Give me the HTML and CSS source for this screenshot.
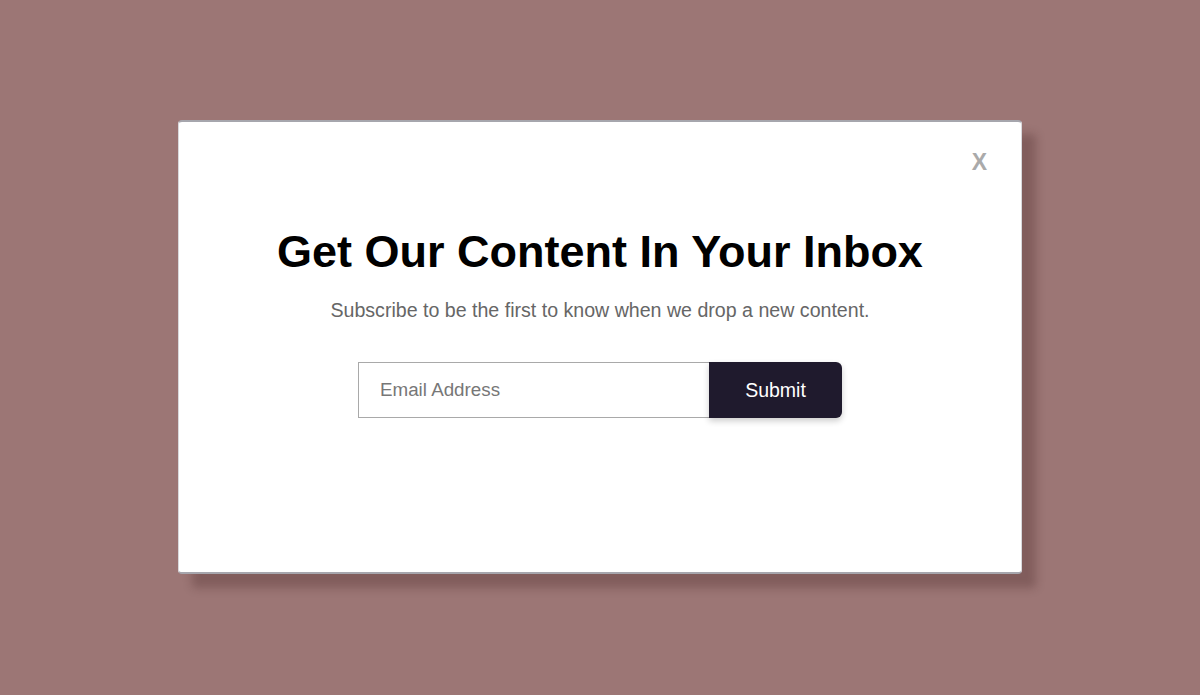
FILE: index.html
```html
<!DOCTYPE html>
<html>
<head>
<meta charset="utf-8">
<link rel="stylesheet" href="styles.css">
</head>
<body>
  <div class="page">
    <div class="modal">
      <span class="close">X</span>
      <h1 class="title">Get Our Content In Your Inbox</h1>
      <p class="subtitle">Subscribe to be the first to know when we drop a new content.</p>
      <form class="form">
        <input class="email" type="text" placeholder="Email Address">
        <button class="submit" type="button">Submit</button>
      </form>
    </div>
  </div>
</body>
</html>
```
FILE: styles.css
```css
html, body {
  margin: 0;
  padding: 0;
}
body {
  background: #9c7675;
  font-family: "Liberation Sans", Arial, sans-serif;
  width: 1200px;
  height: 695px;
  overflow: hidden;
}
.page {
  display: flex;
  justify-content: center;
  padding-top: 120px;
}
.modal {
  position: relative;
  box-sizing: border-box;
  width: 844px;
  height: 454px;
  background: #fff;
  border-top: 2px solid #a6a6ad;
  border-bottom: 2px solid #a6a6ad;
  border-left: 1px solid #d8d8dc;
  border-right: 1px solid #d8d8dc;
  border-radius: 4px;
  box-shadow: 14px 14px 10px rgba(60, 30, 30, 0.28);
  padding-top: 104px;
  display: flex;
  flex-direction: column;
  align-items: center;
}
.close {
  position: absolute;
  top: 27px;
  right: 34px;
  font-size: 23px;
  font-weight: bold;
  color: #aaaaaa;
  line-height: 26px;
}
.title {
  margin: 0;
  font-size: 45px;
  line-height: 52px;
  font-weight: bold;
  color: #000;
}
.subtitle {
  margin: 21px 0 0;
  font-size: 19.6px;
  line-height: 23px;
  color: #666;
}
.form {
  margin-top: 40px;
  display: flex;
}
.email {
  box-sizing: border-box;
  width: 351px;
  height: 56px;
  border: 1px solid #a9a9a9;
  border-right: none;
  padding: 0 0 0 21px;
  font-family: "Liberation Sans", Arial, sans-serif;
  font-size: 18.8px;
  outline: none;
}
.email::placeholder {
  color: #777;
}
.submit {
  width: 133px;
  height: 56px;
  border: none;
  background: #1f1a2d;
  color: #fff;
  font-family: "Liberation Sans", Arial, sans-serif;
  font-size: 19.5px;
  border-radius: 0 6px 6px 0;
  box-shadow: 0 3px 6px rgba(0, 0, 0, 0.2);
}
```
